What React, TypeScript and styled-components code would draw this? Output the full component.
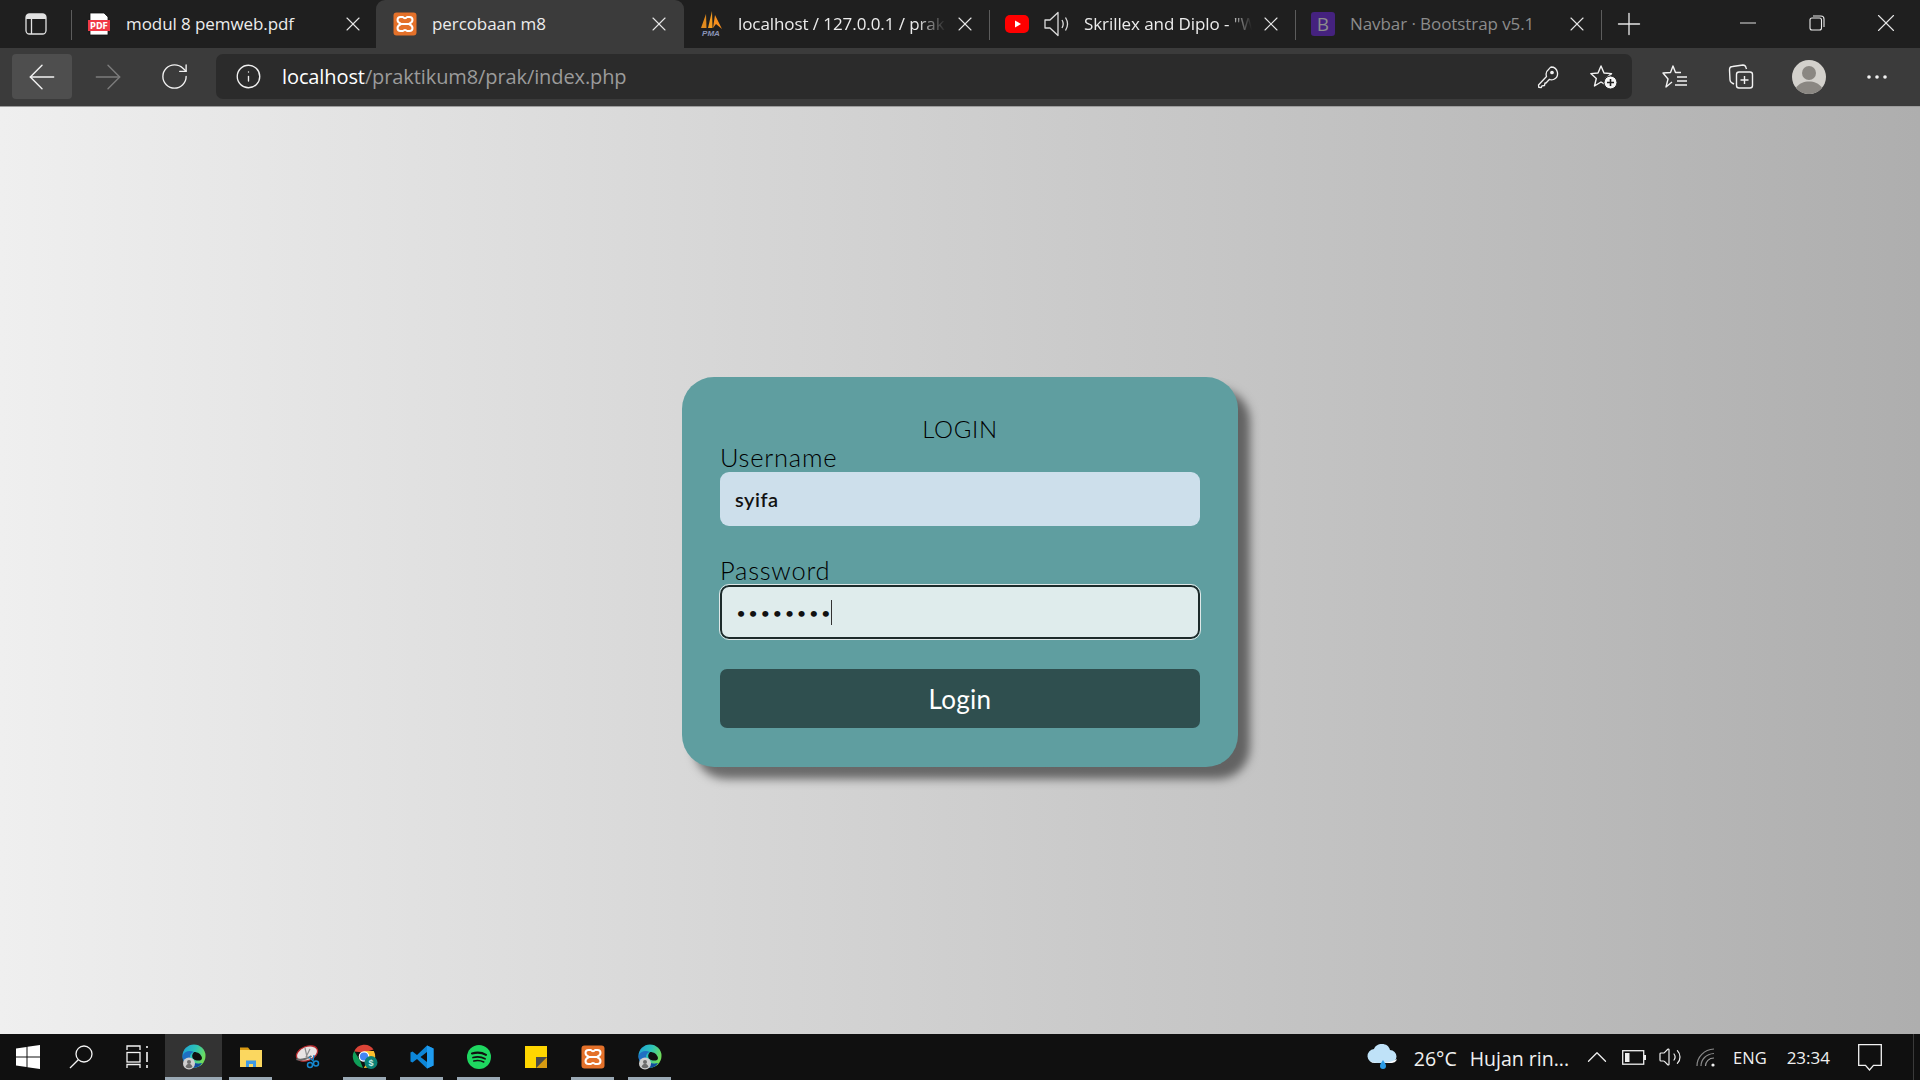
import React, { FC } from 'react';
import styled, { createGlobalStyle } from 'styled-components';
import {
  ArrowLeft,
  ArrowRight,
  ChevronUp,
  Info,
  Minus,
  Plus,
  RotateCw,
  Volume2,
  X,
} from 'lucide-react';

const GlobalStyle = createGlobalStyle`
  html, body, #root {
    margin: 0;
    padding: 0;
    width: 100%;
    height: 100%;
    overflow: hidden;
  }
  * {
    box-sizing: border-box;
  }
  body {
    font-family: "Open Sans", "Noto Sans", sans-serif;
  }
`;

const Screen = styled.div`
  display: flex;
  flex-direction: column;
  width: 1920px;
  height: 1080px;
`;

/* tab strip */
const TabStrip = styled.div`
  display: flex;
  align-items: stretch;
  flex: 0 0 48px;
  background: #1f1f1f;
  color: #e6e6e6;
`;

const SidebarButton = styled.div`
  position: relative;
  display: flex;
  align-items: center;
  justify-content: center;
  width: 72px;
  padding-right: 1px;
  &::after {
    content: '';
    position: absolute;
    right: 0;
    top: 10px;
    width: 1px;
    height: 30px;
    background: #5c5c5c;
  }
`;

const Tab = styled.div<{ $active?: boolean; $sep?: boolean; $dim?: boolean }>`
  position: relative;
  display: flex;
  align-items: center;
  width: ${(p) => (p.$active ? '308px' : '306px')};
  margin-left: ${(p) => (p.$active ? '-2px' : '0')};
  padding: ${(p) => (p.$active ? '0 13px 0 17px' : '0 13px 0 15px')};
  gap: 15px;
  background: ${(p) => (p.$active ? '#3b3b3b' : 'transparent')};
  border-radius: 9px 9px 0 0;
  color: ${(p) => (p.$dim ? '#8c8c8c' : '#ececec')};
  &::after {
    content: '';
    display: ${(p) => (p.$sep ? 'block' : 'none')};
    position: absolute;
    right: 0;
    top: 10px;
    width: 1px;
    height: 30px;
    background: #5c5c5c;
  }
`;

const TabTitle = styled.span<{ $fade?: boolean }>`
  flex: 1;
  min-width: 0;
  font-size: 17px;
  line-height: 22px;
  margin-top: -1px;
  white-space: nowrap;
  overflow: hidden;
  letter-spacing: -0.08px;
  mask-image: ${(p) =>
    p.$fade ? 'linear-gradient(to right, #000 86%, transparent 100%)' : 'none'};
`;

const TabClose = styled.span`
  display: flex;
  flex: 0 0 24px;
  margin-left: -8px;
  color: #e6e6e6;
`;

const NewTab = styled.div`
  display: flex;
  align-items: center;
  justify-content: center;
  width: 54px;
  color: #e6e6e6;
  margin-top: -1px;
`;

const WindowControls = styled.div`
  display: flex;
  margin-left: auto;
  color: #e6e6e6;
`;

const WindowButton = styled.div`
  display: flex;
  align-items: center;
  justify-content: center;
  width: 69px;
  margin-top: -2px;
`;

/* toolbar */
const Toolbar = styled.div`
  display: flex;
  align-items: center;
  flex: 0 0 58px;
  padding: 0 0 1px 12px;
  background: #3b3b3b;
  color: #f0f0f0;
`;

const NavButton = styled.div<{ $hover?: boolean; $off?: boolean }>`
  display: flex;
  align-items: center;
  justify-content: center;
  width: 60px;
  height: 45px;
  margin-right: 6px;
  border-radius: 4px;
  background: ${(p) => (p.$hover ? '#4e4e4e' : 'transparent')};
  color: ${(p) => (p.$off ? '#7c7c7c' : '#f2f2f2')};
`;

const AddressBar = styled.div`
  display: flex;
  align-items: center;
  width: 1416px;
  height: 45px;
  margin-left: 6px;
  padding: 0 14px 0 19px;
  border-radius: 7px;
  background: #2b2b2b;
`;

const Url = styled.div`
  flex: 1;
  margin-left: 20px;
  font-size: 20px;
  letter-spacing: -0.1px;
  color: #9b9b9b;
  strong {
    font-weight: 400;
    color: #fff;
  }
`;

const AddressIcons = styled.div`
  display: flex;
  align-items: center;
  gap: 31px;
`;

const ToolIcons = styled.div`
  display: flex;
  align-items: center;
  margin-left: 30px;
  gap: 40px;
`;

const Avatar = styled.div`
  display: flex;
  width: 34px;
  height: 34px;
  margin: 0 0 0 -2px;
`;

/* page */
const Page = styled.main`
  flex: 1;
  display: flex;
  align-items: center;
  justify-content: center;
  padding-top: 3px;
  background: linear-gradient(to right, #efefef, #aeaeae);
  border-top: 1px solid #9c9c9c;
`;

const Card = styled.form`
  display: flex;
  flex-direction: column;
  width: 556px;
  height: 390px;
  padding: 38px 38px 0;
  border-radius: 32px;
  background: #5f9ea0;
  box-shadow: 12px 12px 10px rgba(0, 0, 0, 0.5);
  font-family: Lato, "Open Sans", sans-serif;
  color: #000;
`;

const Title = styled.h3`
  margin: 0;
  height: 28px;
  font-size: 24px;
  line-height: 27px;
  font-weight: 300;
  text-align: center;
  letter-spacing: 0.7px;
`;

const Label = styled.label`
  display: block;
  height: 29px;
  font-size: 25.5px;
  line-height: 29px;
  font-weight: 300;
  letter-spacing: 0.75px;
`;

const Field = styled.div`
  position: relative;
  height: 54px;
  margin-bottom: 30px;
`;

const Input = styled.input<{ $focused?: boolean }>`
  display: block;
  width: 100%;
  height: 100%;
  padding: 0 15px;
  border: ${(p) => (p.$focused ? '2px solid #1d2b2b' : '0')};
  border-radius: 9px;
  outline: ${(p) => (p.$focused ? '1px solid #dfe8e8' : 'none')};
  background: ${(p) => (p.$focused ? '#dfecec' : '#cddfeb')};
  color: #111;
  font-family: Lato, "Open Sans", sans-serif;
  font-size: ${(p) => (p.$focused ? '14px' : '20px')};
  font-weight: ${(p) => (p.$focused ? 700 : 600)};
  letter-spacing: ${(p) => (p.$focused ? '4px' : '0.5px')};
`;

const Caret = styled.span`
  position: absolute;
  left: 111px;
  top: 15px;
  width: 1px;
  height: 25px;
  background: #333;
`;

const SubmitButton = styled.button`
  height: 59px;
  border: 0;
  border-radius: 7px;
  background: #2f4f4f;
  color: #fff;
  font-family: Lato, "Open Sans", sans-serif;
  font-size: 26px;
  font-weight: 400;
  letter-spacing: 0.3px;
`;

/* taskbar */
const Taskbar = styled.footer`
  display: flex;
  align-items: stretch;
  flex: 0 0 46px;
  padding-right: 6px;
  background: #101010;
  color: #f0f0f0;
`;

const StartSlot = styled.div`
  display: flex;
  align-items: center;
  justify-content: center;
  width: 55px;
`;

const AppSlot = styled.div<{ $active?: boolean; $open?: boolean }>`
  position: relative;
  display: flex;
  align-items: center;
  justify-content: center;
  width: 57px;
  background: ${(p) => (p.$active ? '#333333' : 'transparent')};
  &::after {
    content: '';
    display: ${(p) => (p.$open ? 'block' : 'none')};
    position: absolute;
    bottom: 0;
    left: ${(p) => (p.$active ? '0' : '7px')};
    right: ${(p) => (p.$active ? '0' : '7px')};
    height: 3px;
    background: #9aa9b5;
  }
`;

const Tray = styled.div`
  display: flex;
  align-items: center;
  margin-left: auto;
  padding-right: 31px;
  border-right: 1px solid #3a3a3a;
`;

const TrayItem = styled.div<{ $gap: number }>`
  display: flex;
  align-items: center;
  margin-left: ${(p) => p.$gap}px;
  white-space: nowrap;
`;

const TrayText = styled.span<{ $size: number; $low?: boolean }>`
  font-size: ${(p) => p.$size}px;
  margin-top: ${(p) => (p.$low ? '3px' : '0')};
`;

/* drawings */
const SidebarIcon: FC = () => (
  <svg width='22' height='22' viewBox='0 0 22 22' fill='none'>
    <path d='M1 6V4a3 3 0 0 1 3-3h14a3 3 0 0 1 3 3v2z' fill='#e2e2e2' />
    <rect x='1' y='1' width='20' height='20' rx='3.5' stroke='#e2e2e2' strokeWidth='1.3' />
    <path d='M6.5 6v15' stroke='#e2e2e2' strokeWidth='1.3' />
  </svg>
);

const PdfIcon: FC = () => (
  <svg width='24' height='24' viewBox='0 0 24 24'>
    <path d='M3 1h14l4 4v18H3z' fill='#fff' stroke='#111' strokeWidth='0.8' />
    <rect x='1' y='8' width='22' height='11' fill='#f03a47' />
    <text x='12' y='16.5' textAnchor='middle' fontSize='8' fontWeight='700' fontFamily='"DejaVu Sans", sans-serif' fill='#fff'>
      PDF
    </text>
  </svg>
);

const XamppIcon: FC = () => (
  <svg width='24' height='24' viewBox='0 0 24 24' fill='none'>
    <rect x='0.5' y='0.5' width='23' height='23' rx='3' fill='#e4712a' />
    <path
      d='M10 5H7.500a3 3 0 0 0-3 3c0 2 1.500 3 3.500 4-2 1-3.500 2-3.500 4a3 3 0 0 0 3 3H10c1-1.500 3-1.500 4 0h2.500a3 3 0 0 0 3-3c0-2-1.500-3-3.500-4 2-1 3.500-2 3.500-4a3 3 0 0 0-3-3H14c-1 1.500-3 1.500-4 0zM8 12h8'
      stroke='#fff'
      strokeWidth='2'
      strokeLinejoin='round'
    />
  </svg>
);

const PmaIcon: FC = () => (
  <svg width='24' height='26' viewBox='0 0 24 26'>
    <path d='M2 17 L7 3 L7.5 17z' fill='#e08a1e' />
    <path d='M9 17 L13 0 L13.5 17z' fill='#f39b1f' />
    <path d='M14 17 L16 4 L23 18 L17 13z' fill='#f78f1e' />
    <text x='12' y='24.5' textAnchor='middle' fontSize='8' fontWeight='700' fontStyle='italic' fontFamily='"Liberation Sans", sans-serif' fill='#8a94b8'>
      PMA
    </text>
  </svg>
);

const YoutubeIcon: FC = () => (
  <svg width='24' height='18' viewBox='0 0 24 18'>
    <rect width='24' height='18' rx='5' fill='#f00' />
    <path d='M10 5.5 L16 9 L10 12.5z' fill='#fff' />
  </svg>
);

const SpeakerIcon: FC = () => (
  <svg width='25' height='26' viewBox='0 0 25 26' fill='none' stroke='#dcdcdc' strokeWidth='1.3'>
    <path d='M1 9h5l8-7.5v23L6 17H1z' strokeLinejoin='round' />
    <path d='M18 9c1.5 2.5 1.5 5.500 0 8M21.500 6.500c2.500 4 2.500 9 0 13' />
  </svg>
);

const BootstrapIcon: FC = () => (
  <svg width='24' height='24' viewBox='0 0 24 24'>
    <rect width='24' height='24' rx='3' fill='#45227f' />
    <text x='12' y='19' textAnchor='middle' fontSize='19' fontFamily='"Open Sans", sans-serif' fill='#8c8c8c'>
      B
    </text>
  </svg>
);

const RestoreIcon: FC = () => (
  <svg width='16' height='16' viewBox='0 0 16 16' fill='none' stroke='#ececec' strokeWidth='1.1'>
    <rect x='1' y='3' width='11.500' height='12' rx='2' />
    <path d='M4 1h8a3 3 0 0 1 3 3v8' />
  </svg>
);

const KeyIcon: FC = () => (
  <svg width='22' height='24' viewBox='0 0 22 24' fill='none' stroke='#f0f0f0' strokeWidth='1.3' strokeLinejoin='round'>
    <path d='M14 2a6.500 6.500 0 0 1 2.500 12.500c-1.500.6-3 .5-4-.2L9 18l-1 0-.5 2.500-2.500.3-.7 1.700-2.500-.2-.3-2.300 8-8.500c-1-3 .5-6 2.500-7.500A6 6 0 0 1 14 2z' />
    <circle cx='15' cy='7.500' r='1.200' fill='#f0f0f0' />
  </svg>
);

const StarAddIcon: FC = () => (
  <svg width='28' height='26' viewBox='0 0 28 26' fill='none'>
    <path
      d='M11 2l3 7 7.500.6-5.700 4.900 1.800 7.300L11 18l-6.500 4 1.800-7.500L.8 9.600 8 9z'
      stroke='#f2f2f2'
      strokeWidth='1.4'
      strokeLinejoin='round'
    />
    <circle cx='20.500' cy='18.500' r='6.500' fill='#f6f6f6' stroke='#2b2b2b' strokeWidth='1' />
    <path d='M20.500 15v7M17 18.500h7' stroke='#222' strokeWidth='1.600' />
  </svg>
);

const FavoritesIcon: FC = () => (
  <svg width='26' height='26' viewBox='0 0 26 26' fill='none' stroke='#f2f2f2' strokeWidth='1.4' strokeLinejoin='round'>
    <path d='M19 8.500h-5.500L11 2 8.500 8.500 1 9l5 6-2 8 6-5' />
    <path d='M15 13h10M15 17h10M13 21h12' />
  </svg>
);

const CollectionsIcon: FC = () => (
  <svg width='26' height='26' viewBox='0 0 26 26' fill='none' stroke='#f2f2f2' strokeWidth='1.4' strokeLinejoin='round'>
    <rect x='8.500' y='8' width='16' height='16' rx='2.500' />
    <path d='M16.500 12v8M12.500 16h8' />
    <path d='M6 20l-2-1c-1.200-.7-2-1.500-2-3L1.500 6c0-2 1-3.500 3-3.500L15 1c1.500 0 2.500.8 3 2.500L18.500 5' />
  </svg>
);

const AvatarIcon: FC = () => (
  <svg width='34' height='34' viewBox='0 0 34 34'>
    <circle cx='17' cy='17' r='17' fill='#d3d1cc' />
    <circle cx='17' cy='13' r='7' fill='#8a8782' />
    <path d='M4 28c3-5 8-6.500 13-6.500s10 1.500 13 6.500a17 17 0 0 1-26 0z' fill='#8a8782' />
  </svg>
);

const DotsIcon: FC = () => (
  <svg width='22' height='6' viewBox='0 0 22 6' fill='#f2f2f2'>
    <circle cx='3' cy='3' r='1.800' />
    <circle cx='11' cy='3' r='1.800' />
    <circle cx='19' cy='3' r='1.800' />
  </svg>
);

const WindowsIcon: FC = () => (
  <svg width='24' height='24' viewBox='0 0 24 24' fill='#fff'>
    <path d='M0 3.500l10.500-1.500v9.500H0zM11.500 1.800L24 0v11.500H11.500zM0 12.500h10.500V22L0 20.500zM11.500 12.500H24V24l-12.500-1.800z' />
  </svg>
);

const SearchIcon: FC = () => (
  <svg width='24' height='24' viewBox='0 0 24 24' fill='none' stroke='#f4f4f4' strokeWidth='1.300' style={{ marginLeft: -3 }}>
    <circle cx='15' cy='9' r='8' />
    <path d='M9.300 14.700L1 23' />
  </svg>
);

const TaskViewIcon: FC = () => (
  <svg width='24' height='24' viewBox='0 0 24 24' fill='none' stroke='#f4f4f4' strokeWidth='1.300'>
    <path d='M1 5V1h13v4M1 23v-3.500h13V23' />
    <rect x='1' y='7.500' width='13' height='9.500' />
    <path d='M21 1v2M21 7v10M21 20v3' strokeWidth='1.600' />
  </svg>
);

const EdgeIcon: FC<{ id: string }> = ({ id }) => (
  <svg width='26' height='26' viewBox='0 0 26 26'>
    <defs>
      <linearGradient id={id} x1='0' y1='0' x2='1' y2='0.4'>
        <stop offset='0' stopColor='#1f9fd8' />
        <stop offset='0.55' stopColor='#2cc3b8' />
        <stop offset='1' stopColor='#6fdc5a' />
      </linearGradient>
    </defs>
    <circle cx='13' cy='12' r='11.500' fill={`url(#${id})`} />
    <path d='M13 8C17 8 20 10 21 14 21 17 17 17 14 16 11 15 10 11 13 8z' fill='#101010' />
    <path d='M1.500 12C3 7 9 6 13 8 9 9 8 13 10 16 12 20 18 20.500 21 19 19 22 16 23.500 13 23.500 6.500 23.500 1.500 18 1.500 12z' fill='#1f6fc2' />
    <path d='M10 16c2 4 8 4.500 11 3-2 3-5 4.500-8 4.500-1 0-3-.5-4-1z' fill='#114a9c' />
    <circle cx='8' cy='19.500' r='6' fill='#cfcfcf' />
    <circle cx='8' cy='18' r='2' fill='#6c6c6c' />
    <path d='M4.500 23c.8-2.500 2-3 3.500-3s2.700.5 3.500 3a6 6 0 0 1-7 0z' fill='#6c6c6c' />
  </svg>
);

const FolderIcon: FC = () => (
  <svg width='24' height='22' viewBox='0 0 24 22'>
    <path d='M1 1.500h8l2.500 3H1z' fill='#d99a13' />
    <rect x='1' y='4' width='22' height='17' fill='#fbd75f' />
    <path d='M7 21v-6.500h10V21h-3v-3h-4v3z' fill='#3f9ae6' />
  </svg>
);

const SnipIcon: FC = () => (
  <svg width='26' height='24' viewBox='0 0 26 24' fill='none'>
    <ellipse cx='12' cy='8.500' rx='11' ry='7' transform='rotate(-22 12 8.500)' fill='#e8e4e4' stroke='#b5282c' strokeWidth='1.300' />
    <path d='M1.500 14c5 2 12 -1 15-3' stroke='#6a6a6a' strokeWidth='2' />
    <path d='M10 3l2.500 11M15 4l-4 8' stroke='#8d8d8d' strokeWidth='1.200' />
    <path d='M14 12l4 4 1-6' stroke='#1588d0' strokeWidth='1.300' />
    <circle cx='15' cy='20' r='2.500' stroke='#1588d0' strokeWidth='1.500' />
    <circle cx='21' cy='18.500' r='2.500' stroke='#1588d0' strokeWidth='1.500' />
  </svg>
);

const ChromeIcon: FC = () => (
  <svg width='26' height='26' viewBox='0 0 26 26'>
    <path d='M2.200 7.500A11 11 0 0 1 21.500 5.500L12 8.500z' fill='#db4437' />
    <path d='M2.200 7L8 16.500 11 24A11.500 11.500 0 0 1 2.200 7z' fill='#0f9d58' />
    <path d='M12 7h9.800a11.500 11.500 0 0 1-10 17l5-8.500z' fill='#fbc02d' />
    <circle cx='12' cy='12.500' r='5.300' fill='#fff' />
    <circle cx='12' cy='12.500' r='4.100' fill='#4285f4' />
    <circle cx='19' cy='18.500' r='6.500' fill='#0a8075' />
    <text x='19' y='22' textAnchor='middle' fontSize='9' fontWeight='700' fontFamily='"Liberation Sans", sans-serif' fill='#c9ece6'>
      $
    </text>
  </svg>
);

const VsCodeIcon: FC = () => (
  <svg width='24' height='24' viewBox='0 0 24 24'>
    <path d='M17 0.500L7 10 2.500 6.500 0.500 7.500v9l2 1L7 14l10 9.500 6.500-3V3.500zM17 7v10l-6.500-5z' fill='#0d86d8' fillRule='evenodd' />
    <path d='M17 0.500l6.500 3v17l-6.500 3z' fill='#1f9cf0' />
  </svg>
);

const SpotifyIcon: FC = () => (
  <svg width='24' height='24' viewBox='0 0 24 24' fill='none'>
    <circle cx='12' cy='12' r='12' fill='#1ed760' />
    <path d='M5 8.500c4.500-1.300 10-1 14 1.300' stroke='#111' strokeWidth='2.100' strokeLinecap='round' />
    <path d='M6 12.500c4-1 8.500-.7 12 1.200' stroke='#111' strokeWidth='1.800' strokeLinecap='round' />
    <path d='M6.800 16c3.500-.8 7-.5 10 1' stroke='#111' strokeWidth='1.500' strokeLinecap='round' />
  </svg>
);

const StickyIcon: FC = () => (
  <svg width='22' height='22' viewBox='0 0 22 22'>
    <path d='M0 0h22v11L11 22H0z' fill='#ffd600' />
    <path d='M22 11v11H11z' fill='#d79a12' />
    <path d='M11 22V11h11z' fill='#4a4a4a' />
  </svg>
);

const CloudIcon: FC = () => (
  <svg width='31' height='26' viewBox='0 0 31 26'>
    <path d='M8 19a7 7 0 0 1-1-14c1-3 4-5 8-5 4 0 7 2 8 6a6.500 6.500 0 0 1 0 13z' fill='#bfe2f8' />
    <path d='M3 17c4 3 20 3 27-2-1 3-3 4-7 4H8c-2 0-4-1-5-2z' fill='#ffffff' />
    <path d='M16 16c1.500 2.500 3 4 3 6a3 3 0 0 1-6 0c0-2 1.500-3.500 3-6z' fill='#2a9be6' />
  </svg>
);

const BatteryIcon: FC = () => (
  <svg width='24' height='15' viewBox='0 0 24 15' fill='none'>
    <rect x='0.700' y='0.700' width='21' height='13.500' stroke='#f0f0f0' strokeWidth='1.300' />
    <rect x='3' y='3' width='4.500' height='9' fill='#f0f0f0' />
    <rect x='22' y='5' width='2' height='5' fill='#f0f0f0' />
  </svg>
);

const WifiIcon: FC = () => (
  <svg width='19' height='19' viewBox='0 0 19 19' fill='none' stroke='#8a8a8a' strokeWidth='1.200'>
    <path d='M1 18C1 9 8 1.500 18 1' />
    <path d='M5 18c0-6.500 5-12 13-12.500' />
    <path d='M9.500 18c0-4.500 3.500-8 8.500-8' stroke='#9a9a9a' />
    <circle cx='17' cy='17' r='1.600' fill='#f0f0f0' stroke='none' />
  </svg>
);

const NotifyIcon: FC = () => (
  <svg width='24' height='27' viewBox='0 0 24 27' fill='none' stroke='#f2f2f2' strokeWidth='1.300'>
    <path d='M.7.700h22.600v20.600H15.500L11.500 26 7.500 21.300H.7z' />
  </svg>
);

const CloseIcon: FC = () => <X size={24} strokeWidth={1.1} />;

const App: FC = () => {
  return (
    <Screen>
      <GlobalStyle />
      <TabStrip>
        <SidebarButton>
          <SidebarIcon />
        </SidebarButton>
        <Tab>
          <PdfIcon />
          <TabTitle>modul 8 pemweb.pdf</TabTitle>
          <TabClose><CloseIcon /></TabClose>
        </Tab>
        <Tab $active>
          <XamppIcon />
          <TabTitle>percobaan m8</TabTitle>
          <TabClose><CloseIcon /></TabClose>
        </Tab>
        <Tab $sep>
          <PmaIcon />
          <TabTitle $fade>localhost / 127.0.0.1 / prak</TabTitle>
          <TabClose><CloseIcon /></TabClose>
        </Tab>
        <Tab $sep>
          <YoutubeIcon />
          <SpeakerIcon />
          <TabTitle $fade>Skrillex and Diplo - "W</TabTitle>
          <TabClose><CloseIcon /></TabClose>
        </Tab>
        <Tab $sep $dim>
          <BootstrapIcon />
          <TabTitle>Navbar · Bootstrap v5.1</TabTitle>
          <TabClose><CloseIcon /></TabClose>
        </Tab>
        <NewTab><Plus size={36} strokeWidth={0.9} /></NewTab>
        <WindowControls>
          <WindowButton><Minus size={26} strokeWidth={0.9} /></WindowButton>
          <WindowButton><RestoreIcon /></WindowButton>
          <WindowButton><X size={30} strokeWidth={0.9} /></WindowButton>
        </WindowControls>
      </TabStrip>

      <Toolbar>
        <NavButton $hover><ArrowLeft size={40} strokeWidth={0.85} /></NavButton>
        <NavButton $off><ArrowRight size={40} strokeWidth={0.85} /></NavButton>
        <NavButton><RotateCw size={31} strokeWidth={1.05} /></NavButton>
        <AddressBar>
          <Info size={27} strokeWidth={1.2} />
          <Url><strong>localhost</strong>/praktikum8/prak/index.php</Url>
          <AddressIcons>
            <KeyIcon />
            <StarAddIcon />
          </AddressIcons>
        </AddressBar>
        <ToolIcons>
          <FavoritesIcon />
          <CollectionsIcon />
          <Avatar><AvatarIcon /></Avatar>
          <DotsIcon />
        </ToolIcons>
      </Toolbar>

      <Page>
        <Card onSubmit={(e) => e.preventDefault()}>
          <Title>LOGIN</Title>
          <Label>Username</Label>
          <Field>
            <Input type='text' value='syifa' readOnly />
          </Field>
          <Label>Password</Label>
          <Field>
            <Input $focused type='password' value='password' readOnly />
            <Caret />
          </Field>
          <SubmitButton type='submit'>Login</SubmitButton>
        </Card>
      </Page>

      <Taskbar>
        <StartSlot><WindowsIcon /></StartSlot>
        <StartSlot><SearchIcon /></StartSlot>
        <StartSlot><TaskViewIcon /></StartSlot>
        <AppSlot $active $open><EdgeIcon id='edge-a' /></AppSlot>
        <AppSlot $open><FolderIcon /></AppSlot>
        <AppSlot><SnipIcon /></AppSlot>
        <AppSlot $open><ChromeIcon /></AppSlot>
        <AppSlot $open><VsCodeIcon /></AppSlot>
        <AppSlot $open><SpotifyIcon /></AppSlot>
        <AppSlot><StickyIcon /></AppSlot>
        <AppSlot $open><XamppIcon /></AppSlot>
        <AppSlot $open><EdgeIcon id='edge-b' /></AppSlot>
        <Tray>
          <TrayItem $gap={0}><CloudIcon /></TrayItem>
          <TrayItem $gap={16}><TrayText $size={19.5} $low>26°C</TrayText></TrayItem>
          <TrayItem $gap={13}><TrayText $size={19.5} $low>Hujan rin...</TrayText></TrayItem>
          <TrayItem $gap={11}><ChevronUp size={34} strokeWidth={0.9} /></TrayItem>
          <TrayItem $gap={8}><BatteryIcon /></TrayItem>
          <TrayItem $gap={12}><Volume2 size={24} strokeWidth={1.2} /></TrayItem>
          <TrayItem $gap={14}><WifiIcon /></TrayItem>
          <TrayItem $gap={18}><TrayText $size={16.5}>ENG</TrayText></TrayItem>
          <TrayItem $gap={20}><TrayText $size={17}>23:34</TrayText></TrayItem>
          <TrayItem $gap={28}><NotifyIcon /></TrayItem>
        </Tray>
      </Taskbar>
    </Screen>
  );
};

export default App;
